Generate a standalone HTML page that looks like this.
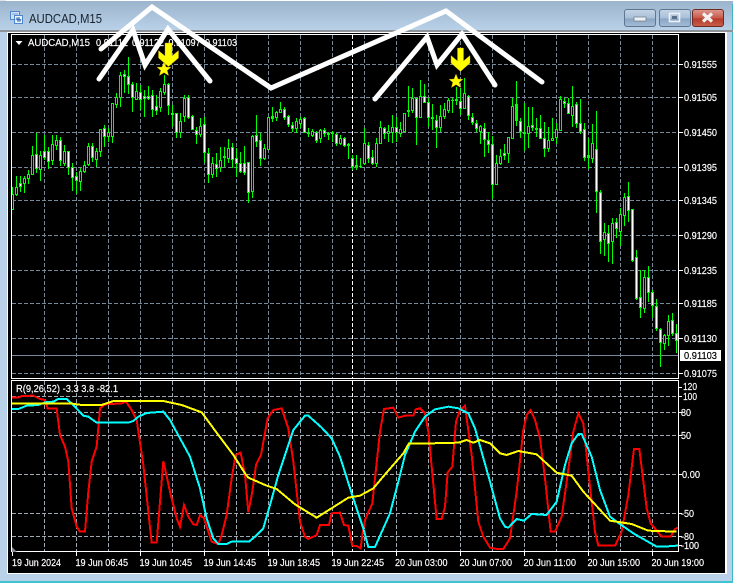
<!DOCTYPE html>
<html><head><meta charset="utf-8"><title>AUDCAD,M15</title>
<style>
html,body{margin:0;padding:0;width:736px;height:583px;overflow:hidden;background:#fff}
svg{display:block}
text{font-family:"Liberation Sans",sans-serif;font-size:10.5px;fill:#fff;stroke:#fff;stroke-width:.18}
.c{shape-rendering:crispEdges;fill:none}
</style></head><body>
<svg width="736" height="583" viewBox="0 0 736 583" xmlns="http://www.w3.org/2000/svg">
<defs>
<linearGradient id="tb" x1="0" y1="0" x2="0" y2="1"><stop offset="0" stop-color="#9bb4cd"/><stop offset="1" stop-color="#bad2e9"/></linearGradient>
<linearGradient id="btn" x1="0" y1="0" x2="0" y2="1"><stop offset="0" stop-color="#c3d4e6"/><stop offset=".5" stop-color="#a9c0d9"/><stop offset=".55" stop-color="#8aa6c4"/><stop offset="1" stop-color="#a5bdd6"/></linearGradient>
<linearGradient id="cl" x1="0" y1="0" x2="0" y2="1"><stop offset="0" stop-color="#dc9a90"/><stop offset=".5" stop-color="#c9584a"/><stop offset=".55" stop-color="#b53a2a"/><stop offset="1" stop-color="#c9604c"/></linearGradient>
<clipPath id="top"><rect x="12" y="35" width="666" height="343"/></clipPath>
<clipPath id="bot"><rect x="12" y="381" width="666" height="170"/></clipPath>
</defs>

<!-- window frame -->
<rect width="736" height="583" fill="#fff"/>
<path d="M0 8Q0 1 8 1H726Q733 1 733 8V581H0Z" fill="#b9d1e9"/>
<rect x="0" y="1" width="733" height="30" fill="url(#tb)"/>
<rect x="0" y="0" width="6" height="1" fill="#dfe6ee"/>
<rect x="732" y="4" width="1" height="578" fill="#3fb6c4"/>
<rect x="0" y="581" width="733" height="2" fill="#3fc3d2"/>
<rect x="733" y="0" width="3" height="583" fill="#fff"/>
<rect x="0" y="30" width="733" height="2" fill="#8d9299"/>
<rect x="7" y="32" width="720" height="542" fill="#fff"/>
<rect x="8" y="33" width="717" height="540" fill="#000"/>

<!-- title icon -->
<g class="c">
<rect x="10.5" y="11.5" width="9" height="8" fill="#cfe0f5" stroke="#4f86d0"/>
<rect x="14.5" y="15.5" width="8" height="8" fill="#eaf2fb" stroke="#4f86d0"/>
<path d="M12 14h6" stroke="#7aa0d6"/>
<path d="M16 20l1-2 1 3 1-3 1 3 1-2" stroke="#3d6fb8"/>
</g>
<text x="29" y="23" style="font-size:12.5px;fill:#18222e;stroke:none" textLength="73" lengthAdjust="spacingAndGlyphs">AUDCAD,M15</text>

<!-- window buttons -->
<rect x="624.5" y="9.5" width="31" height="17" rx="2.5" fill="url(#btn)" stroke="#5f7690"/>
<rect x="634" y="17" width="12" height="4" fill="#eef1f4" stroke="#6b7785" stroke-width=".7"/>
<rect x="659.5" y="9.5" width="31" height="17" rx="2.5" fill="url(#btn)" stroke="#5f7690"/>
<rect x="669.5" y="13.5" width="10" height="8" fill="none" stroke="#eef1f4" stroke-width="1.6"/>
<rect x="672" y="16" width="5" height="3" fill="#59708a"/>
<rect x="692.5" y="9.5" width="31" height="17" rx="2.5" fill="url(#cl)" stroke="#6d2b22"/>
<path d="M703 13.5l9 8M712 13.5l-9 8" stroke="#f4f2f0" stroke-width="3.2" fill="none"/>

<!-- chart frames -->
<g class="c" stroke="#fff">
<path d="M11.5 34V378M11 34.5H679M678.5 34V379M11 378.5H679"/>
<path d="M11.5 380V552M11 380.5H679M678.5 380V552M11 551.5H679"/>
</g>

<!-- grid -->
<g class="c" stroke="#778899" stroke-dasharray="4 2">
<path d="M12 64.5H678M12 97.5H678M12 132.5H678M12 167.5H678M12 200.5H678M12 235.5H678M12 270.5H678M12 303.5H678M12 338.5H678M12 373.5H678"/>
<path d="M44.5 35V378M76.5 35V378M108.5 35V378M140.5 35V378M172.5 35V378M204.5 35V378M236.5 35V378M268.5 35V378M300.5 35V378M332.5 35V378M364.5 35V378M396.5 35V378M428.5 35V378M460.5 35V378M492.5 35V378M524.5 35V378M556.5 35V378M588.5 35V378M620.5 35V378M652.5 35V378"/>
</g>
<g class="c" stroke="#a0a7b0" stroke-dasharray="4 2">
<path d="M12 396.5H678M12 412.5H678M12 435.5H678M12 474.5H678M12 513.5H678M12 536.5H678"/>
<path d="M44.5 381V551M76.5 381V551M108.5 381V551M140.5 381V551M172.5 381V551M204.5 381V551M236.5 381V551M268.5 381V551M300.5 381V551M332.5 381V551M364.5 381V551M396.5 381V551M428.5 381V551M460.5 381V551M492.5 381V551M524.5 381V551M556.5 381V551M588.5 381V551M620.5 381V551M652.5 381V551"/>
</g>
<path class="c" d="M352.5 35V378M352.5 381V551" stroke="#fff" stroke-dasharray="4 2"/>
<path class="c" d="M12 355.5H678" stroke="#778899"/>

<!-- candles -->
<g clip-path="url(#top)"><g transform="translate(.5 0)" class="c">
<path stroke="#00ff00" d="M12 187V209M16 176V196M20 176V192M24 176V193M28 170V184M32 146V174M36 133V173M40 151V181M44 135V160M48 147V169M52 135V165M56 135V150M60 137V166M64 145V166M68 152V175M72 163V191M76 172V194M80 168V191M84 161V173M88 143V166M92 143V162M96 148V167M100 129V157M104 125V147M108 128V142M112 103V143M116 93V108M120 72V107M124 70V93M128 57V94M132 82V112M136 83V100M140 85V110M144 90V117M148 86V100M152 90V117M156 95V115M160 88V112M164 75V95M168 83V115M172 105V127M176 113V138M180 113V138M184 95V122M188 95V119M192 115V130M196 127V144M200 118V137M204 117V163M208 148V183M212 157V178M216 153V177M220 147V172M224 147V167M228 139V163M232 143V168M236 148V177M240 152V173M244 146V175M248 162V203M252 135V198M256 115V147M260 133V166M264 144V160M268 117V150M272 107V122M276 111V121M280 102V113M284 107V120M288 115V127M292 122V132M296 118V133M300 117V128M304 117V133M308 128V137M312 129V137M316 131V143M320 129V143M324 128V137M328 132V140M332 131V142M336 133V146M340 135V145M344 137V147M348 143V159M352 155V170M356 155V170M360 158V168M364 128V165M368 142V163M372 150V165M376 138V167M380 121V143M384 127V139M388 125V142M392 115V143M396 117V142M400 122V137M404 113V132M408 86V117M412 88V113M416 98V145M420 80V118M424 84V103M428 98V127M432 104V130M436 115V148M440 105V132M444 103V119M448 98V113M452 98V113M456 87V105M460 88V115M464 78V107M468 95V120M472 113V125M476 120V132M480 125V144M484 123V157M488 132V153M492 136V199M496 155V185M500 149V165M504 144V160M508 137V163M512 98V139M516 81V126M520 118V138M524 103V151M528 107V148M532 107V131M536 118V137M540 115V139M544 122V157M548 127V152M552 118V141M556 123V144M560 96V131M564 98V108M568 98V114M572 86V127M576 102V128M580 99V134M584 123V161M588 138V169M592 124V163M596 111V213M600 190V254M604 223V256M608 225V262M612 218V264M616 218V238M620 208V246M624 193V226M628 182V222M632 209V262M636 250V300M640 270V318M644 270V313M648 266V302M652 290V318M656 299V331M660 328V367M664 334V350M668 315V346M672 313V336M676 324V353"/>
<path stroke="#00ff00" stroke-width="3" d="M12 194V210M16 187V195M20 183V187M24 178V184M28 174V179M32 155V175M36 154V169M40 155V170M44 151V158M48 151V162M52 144V161M56 140V146M60 140V161M64 151V164M68 151V168M72 167V178M76 176V181M80 171V182M84 165V172M88 146V165M92 146V158M96 151V160M100 129V152M104 128V137M108 132V137M112 103V137M116 97V105M120 75V98M124 74V77M128 76V85M132 84V98M136 91V100M140 92V100M144 96V99M148 96V99M152 95V110M156 106V111M160 91V108M164 84V93M168 84V106M172 113V115M176 113V133M180 121V133M184 98V117M188 97V118M192 116V130M196 130V135M200 126V135M204 124V153M208 153V175M212 163V175M216 164V169M220 160V168M224 156V158M228 148V159M232 147V160M236 158V164M240 163V172M244 163V173M248 162V193M252 136V192M256 135V142M260 140V159M264 148V159M268 117V150M272 116V119M276 112V118M280 109V113M284 109V118M288 116V125M292 125V129M296 121V129M300 119V124M304 118V133M308 133V134M312 131V136M316 132V141M320 130V139M324 130V134M328 133V135M332 133V134M336 134V144M340 138V144M344 138V146M348 144V146M352 158V167M356 165V167M360 166V167M364 143V164M368 145V159M372 157V164M376 143V164M380 127V144M384 128V134M388 131V134M392 127V133M396 127V133M400 129V134M404 113V132M408 110V112M412 98V111M416 98V118M420 96V118M424 96V103M428 102V118M432 117V119M436 120V128M440 116V128M444 109V117M448 100V111M452 100V101M456 99V101M460 101V109M464 93V109M468 96V116M472 117V123M476 123V129M480 126V132M484 128V140M488 140V145M492 144V185M496 163V185M500 156V164M504 153V156M508 137V154M512 106V139M516 104V121M520 121V132M524 133V134M528 126V134M532 125V128M536 128V130M540 128V139M544 138V149M548 140V149M552 138V141M556 129V138M560 99V131M564 101V104M568 103V114M572 106V116M576 104V124M580 123V132M584 129V158M588 155V158M592 143V159M596 149V192M600 192V242M604 232V240M608 233V244M612 223V242M616 222V229M620 214V232M624 197V216M628 196V211M632 209V261M636 257V299M640 297V308M644 277V309M648 277V293M652 292V306M656 306V329M660 329V343M664 335V344M668 321V336M672 320V334M676 333V341"/>
<path stroke="#fff" d="M20 184V186M36 155V168M44 152V157M48 152V161M60 141V160M68 152V167M72 168V177M76 177V180M92 147V157M104 129V136M124 75V76M128 77V84M132 85V97M140 93V99M144 97V98M148 97V98M152 96V109M156 107V110M168 85V105M176 114V132M188 98V117M192 117V129M196 131V134M204 125V152M208 154V174M216 165V168M232 148V159M236 159V163M240 164V171M244 164V172M248 163V192M256 136V141M260 141V158M284 110V117M288 117V124M292 126V128M304 119V132M316 133V140M324 131V133M336 135V143M344 139V145M352 159V166M368 146V158M372 158V163M384 129V133M396 128V132M416 99V117M424 97V102M428 103V117M436 121V127M460 102V108M468 97V115M472 118V122M476 124V128M480 127V131M484 129V139M488 141V144M492 145V184M504 154V155M520 122V131M532 126V127M540 129V138M544 139V148M564 102V103M568 104V113M576 105V123M580 124V131M584 130V157M596 150V191M600 193V241M608 234V243M616 223V228M628 197V210M632 210V260M636 258V298M640 298V307M648 278V292M652 293V305M656 307V328M660 330V342M672 321V333M676 334V340"/>
<path stroke="#000" d="M12 195V209M16 188V194M24 179V183M28 175V178M32 156V174M40 156V169M52 145V160M56 141V145M64 152V163M80 172V181M84 166V171M88 147V164M96 152V159M100 130V151M108 133V136M112 104V136M116 98V104M120 76V97M136 92V99M160 92V107M164 85V92M180 122V132M184 99V116M200 127V134M212 164V174M220 161V167M228 149V158M252 137V191M264 149V158M268 118V149M276 113V117M280 110V112M296 122V128M300 120V123M312 132V135M320 131V138M340 139V143M364 144V163M376 144V163M380 128V143M388 132V133M392 128V132M400 130V133M404 114V131M412 99V110M420 97V117M440 117V127M444 110V116M448 101V110M464 94V108M480 127V131M496 164V184M500 157V163M508 138V153M512 107V138M528 127V133M548 141V148M552 139V140M556 130V137M560 100V130M572 107V115M592 144V158M604 233V239M612 224V241M620 215V231M624 198V215M644 278V308M664 336V343M668 322V335"/>
</g></g>

<!-- indicator lines -->
<g clip-path="url(#bot)" fill="none" stroke-linejoin="miter" shape-rendering="crispEdges">
<g transform="translate(0 375) scale(.33333)" stroke-width="6">
<polyline stroke="#ff0000" points="36,68 55,68 65,63 100,62 120,72 135,75 143,100 170,101 180,180 195,215 205,260 215,400 230,455 240,470 255,470 265,350 275,260 290,215 300,100 315,88 365,85 378,80 395,105 410,135 430,270 455,503 470,503 490,258 497,290 510,350 530,430 540,455 552,390 565,425 580,448 590,450 600,420 612,430 635,500 655,507 665,480 680,420 695,310 707,240 722,233 735,300 745,412 757,350 768,270 783,240 803,130 820,105 845,100 865,160 880,260 900,440 915,485 925,492 950,480 960,450 987,450 995,415 1020,413 1032,450 1045,452 1057,512 1070,513 1082,520 1087,480 1095,435 1117,385 1140,170 1152,102 1180,98 1195,128 1215,122 1240,122 1247,103 1260,100 1275,115 1285,170 1310,432 1325,432 1335,395 1343,292 1357,275 1368,140 1380,105 1395,92 1415,240 1435,440 1450,485 1470,518 1490,522 1510,522 1530,490 1550,350 1570,165 1580,120 1592,105 1605,135 1620,190 1635,310 1652,470 1665,470 1685,425 1700,320 1720,170 1735,115 1750,145 1765,290 1785,470 1795,512 1845,512 1865,470 1885,360 1902,222 1918,222 1940,400 1952,445 1985,485 2012,485 2025,462 2035,458 2050,470"/>
<polyline stroke="#00ffff" points="36,102 55,102 80,92 115,90 135,82 160,80 175,72 200,72 220,90 250,122 265,125 290,143 385,143 400,138 415,125 440,114 490,110 510,135 540,190 570,245 600,340 620,430 640,490 655,507 680,507 695,500 747,500 765,485 790,460 810,390 835,300 860,225 880,165 915,122 925,122 965,158 995,190 1020,245 1055,355 1090,460 1105,516 1125,516 1170,415 1195,320 1215,240 1245,170 1275,125 1305,103 1345,95 1375,100 1405,115 1425,160 1470,320 1500,430 1515,455 1525,458 1550,432 1572,437 1595,417 1640,420 1670,380 1695,270 1715,205 1735,177 1745,177 1775,245 1800,345 1830,425 1850,440 1900,475 1970,515 1990,515 2030,512 2050,512"/>
<polyline stroke="#ffff00" points="36,85 210,85 245,90 305,90 340,78 490,78 545,90 605,112 655,180 700,240 735,295 745,308 800,332 830,342 885,388 950,428 1045,368 1080,362 1120,340 1145,310 1210,235 1227,205 1295,205 1375,203 1400,195 1420,203 1440,195 1470,205 1500,235 1520,240 1555,228 1610,238 1670,293 1715,302 1750,350 1830,437 1895,447 1945,467 2030,470"/>
</g>
</g>

<!-- small triangle -->
<polygon points="12,547 17,552 12,552" fill="#8a8f96"/>

<!-- axis ticks -->
<path class="c" stroke="#fff" d="M679 64.5h4M679 97.5h4M679 132.5h4M679 167.5h4M679 200.5h4M679 235.5h4M679 270.5h4M679 303.5h4M679 338.5h4M679 373.5h4M679 387.5h3M679 396.5h3M679 412.5h3M679 435.5h3M679 474.5h3M679 513.5h3M679 536.5h3M679 545.5h3M12.5 552v4M76.5 552v4M140.5 552v4M204.5 552v4M268.5 552v4M332.5 552v4M396.5 552v4M460.5 552v4M524.5 552v4M588.5 552v4M652.5 552v4"/>

<!-- labels -->
<polygon points="15.5,41 22.5,41 19,45" fill="#fff"/>
<text x="28" y="46" textLength="62" lengthAdjust="spacingAndGlyphs">AUDCAD,M15</text>
<text x="96" y="46" textLength="32" lengthAdjust="spacingAndGlyphs">0.91112</text>
<text x="132" y="46" textLength="32" lengthAdjust="spacingAndGlyphs">0.91122</text>
<text x="168.5" y="46" textLength="32" lengthAdjust="spacingAndGlyphs">0.91097</text>
<text x="205" y="46" textLength="32" lengthAdjust="spacingAndGlyphs">0.91103</text>

<text x="684" y="68" textLength="33" lengthAdjust="spacingAndGlyphs">0.91555</text>
<text x="684" y="101" textLength="33" lengthAdjust="spacingAndGlyphs">0.91505</text>
<text x="684" y="136" textLength="33" lengthAdjust="spacingAndGlyphs">0.91450</text>
<text x="684" y="171" textLength="33" lengthAdjust="spacingAndGlyphs">0.91395</text>
<text x="684" y="204" textLength="33" lengthAdjust="spacingAndGlyphs">0.91345</text>
<text x="684" y="239" textLength="33" lengthAdjust="spacingAndGlyphs">0.91290</text>
<text x="684" y="274" textLength="33" lengthAdjust="spacingAndGlyphs">0.91235</text>
<text x="684" y="307" textLength="33" lengthAdjust="spacingAndGlyphs">0.91185</text>
<text x="684" y="342" textLength="33" lengthAdjust="spacingAndGlyphs">0.91130</text>
<text x="684" y="377" textLength="33" lengthAdjust="spacingAndGlyphs">0.91075</text>
<rect x="680" y="350" width="41" height="11" fill="#fff"/>
<text x="684" y="359" style="fill:#000;stroke:#000" textLength="33" lengthAdjust="spacingAndGlyphs">0.91103</text>

<text x="16" y="392" textLength="102" lengthAdjust="spacingAndGlyphs">R(9,26,52) -3.3 3.8 -82.1</text>
<text x="683" y="390" textLength="14" lengthAdjust="spacingAndGlyphs">120</text>
<text x="683" y="400" textLength="14" lengthAdjust="spacingAndGlyphs">100</text>
<text x="681" y="416" textLength="10" lengthAdjust="spacingAndGlyphs">80</text>
<text x="681" y="439" textLength="10" lengthAdjust="spacingAndGlyphs">50</text>
<text x="682" y="478" textLength="18" lengthAdjust="spacingAndGlyphs">0.00</text>
<text x="681" y="517" textLength="13" lengthAdjust="spacingAndGlyphs">-50</text>
<text x="681" y="540" textLength="13" lengthAdjust="spacingAndGlyphs">-80</text>
<text x="681" y="549" textLength="18" lengthAdjust="spacingAndGlyphs">-100</text>

<text x="12" y="566" textLength="49" lengthAdjust="spacingAndGlyphs">19 Jun 2024</text>
<text x="75.5" y="566" textLength="52.5" lengthAdjust="spacingAndGlyphs">19 Jun 06:45</text>
<text x="139.5" y="566" textLength="52.5" lengthAdjust="spacingAndGlyphs">19 Jun 10:45</text>
<text x="203.5" y="566" textLength="52.5" lengthAdjust="spacingAndGlyphs">19 Jun 14:45</text>
<text x="267.5" y="566" textLength="52.5" lengthAdjust="spacingAndGlyphs">19 Jun 18:45</text>
<text x="331.5" y="566" textLength="52.5" lengthAdjust="spacingAndGlyphs">19 Jun 22:45</text>
<text x="395" y="566" textLength="52.5" lengthAdjust="spacingAndGlyphs">20 Jun 03:00</text>
<text x="459.5" y="566" textLength="52.5" lengthAdjust="spacingAndGlyphs">20 Jun 07:00</text>
<text x="523.5" y="566" textLength="52.5" lengthAdjust="spacingAndGlyphs">20 Jun 11:00</text>
<text x="587.5" y="566" textLength="52.5" lengthAdjust="spacingAndGlyphs">20 Jun 15:00</text>
<text x="651.5" y="566" textLength="52.5" lengthAdjust="spacingAndGlyphs">20 Jun 19:00</text>

<!-- hand drawn white lines -->
<g fill="none" stroke="#fff" stroke-width="5" stroke-linecap="round" stroke-linejoin="miter">
<polyline points="99,79 133,30 145,65 168,29 210,81"/>
<polyline points="101,49 152,7 271,88 446,11 542,82"/>
<polyline points="375,99 427,37 437,65 462,34 495,85"/>
</g>

<!-- arrows and stars -->
<g fill="#ffff00" stroke="#c9a010" stroke-width=".4">
<polygon points="165,43 172,43 172,56 178.5,50.5 178.5,58 168.5,66.5 158.5,58 158.5,50.5 165,56"/>
<polygon points="457.5,48 463.5,48 463.5,61 470,55.5 470,63 460.5,71.5 451,63 451,55.5 457.5,61"/>
<polygon points="164,62 166,67 171,67.2 167.2,70.4 168.6,75.5 164,72.6 159.4,75.5 160.8,70.4 157,67.2 162,67"/>
<polygon points="456,74 458,79 463,79.2 459.2,82.4 460.6,87.5 456,84.6 451.4,87.5 452.8,82.4 449,79.2 454,79"/>
</g>
</svg>
</body></html>
